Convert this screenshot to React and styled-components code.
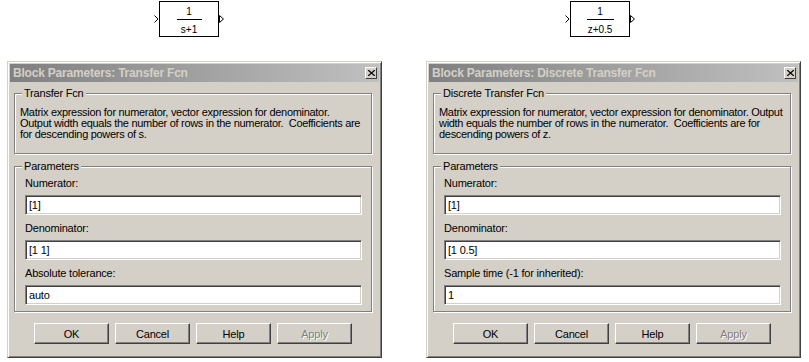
import styled, { createGlobalStyle } from "styled-components";

const GlobalStyle = createGlobalStyle`
  html, body {
    margin: 0;
    background: #fff;
  }
  body {
    font-family: "Liberation Sans", Arial, sans-serif;
  }
`;

const Page = styled.div`
  width: 809px;
  height: 362px;
  padding-left: 7px;
  box-sizing: border-box;
  overflow: hidden;
`;

const Row = styled.div`
  display: flex;
  gap: 44px;
  align-items: flex-start;
`;

const BlockCell = styled.div`
  width: 375px;
  height: 61px;
  padding-top: 1px;
  box-sizing: border-box;
  display: flex;
  align-items: flex-start;
`;

const BlockWrap = styled.div`
  display: flex;
  align-items: center;
  margin-left: ${(p) => p.$offset}px;
`;

const BlockBox = styled.div`
  width: 60px;
  height: 36px;
  box-sizing: border-box;
  border: 1px solid #000;
  padding-top: 5px;
  display: flex;
  flex-direction: column;
  align-items: center;
  font-size: 10px;
  line-height: 10px;
  color: #000;
`;

const FractionLine = styled.div`
  width: ${(p) => p.$width}px;
  height: 1px;
  background: #000;
  margin: 2px 0 5px;
`;

const Window = styled.div`
  width: 375px;
  height: 297px;
  box-sizing: border-box;
  background: #d4d0c8;
  border: 1px solid;
  border-color: #d4d0c8 #404040 #404040 #d4d0c8;
  box-shadow: inset 1px 1px 0 #fff, inset -1px -1px 0 #808080;
  padding: 2px;
  display: flex;
  flex-direction: column;
`;

const TitleBar = styled.div`
  height: 18px;
  background: linear-gradient(to right, #808080, #c0c0c0);
  display: flex;
  align-items: center;
  justify-content: space-between;
  padding: 0 2px 0 3px;
  color: #d4d0c8;
  font-weight: bold;
  font-size: 12px;
  letter-spacing: -0.2px;
`;

const CloseButton = styled.div`
  width: 12px;
  height: 12px;
  box-sizing: border-box;
  background: #d4d0c8;
  border: 1px solid;
  border-color: #fff #404040 #404040 #fff;
  display: flex;
  align-items: center;
  justify-content: center;
`;

const Body = styled.div`
  flex: 1;
  padding: 0 7px 0 4px;
  display: flex;
  flex-direction: column;
  font-size: 11px;
  letter-spacing: -0.2px;
  color: #000;
`;

const GroupBox = styled.fieldset`
  margin: ${(p) => p.$top}px 0 0;
  padding: 0;
  min-width: 0;
  border: 1px solid #808080;
  box-shadow: inset 1px 1px 0 #fff, 1px 1px 0 #fff;
`;

const Legend = styled.legend`
  margin-left: 7px;
  padding: 0 2px;
  line-height: 12px;
  background: #d4d0c8;
`;

const Description = styled.div`
  padding: 8px 0 13px 5px;
  line-height: 11px;
  letter-spacing: -0.3px;
  white-space: pre;
`;

const Fields = styled.div`
  padding: 5px 9px 6px 10px;
  display: flex;
  flex-direction: column;
`;

const Label = styled.div`
  line-height: 12px;
  margin-top: ${(p) => (p.$first ? 0 : 7)}px;
`;

const Input = styled.div`
  height: 20px;
  margin-top: 6px;
  box-sizing: border-box;
  background: #fff;
  border: 1px solid;
  border-color: #808080 #fff #fff #808080;
  box-shadow: inset 1px 1px 0 #404040, inset -1px -1px 0 #d4d0c8;
  padding-left: 3px;
  line-height: 18px;
`;

const Buttons = styled.div`
  display: flex;
  justify-content: center;
  gap: 6px;
  margin-top: 11px;
`;

const Button = styled.div`
  width: 75px;
  height: 21px;
  box-sizing: border-box;
  border: 1px solid;
  border-color: #fff #404040 #404040 #fff;
  box-shadow: inset -1px -1px 0 #808080;
  display: flex;
  align-items: center;
  justify-content: center;
  color: ${(p) => (p.$disabled ? "#808080" : "#000")};
  text-shadow: ${(p) => (p.$disabled ? "1px 1px 0 #fff" : "none")};
`;

const InArrow = () => (
  <svg width="5" height="8" viewBox="0 0 5 8">
    <path d="M0.5 0.5 L4 4 L0.5 7.5" fill="none" stroke="#000" strokeWidth="1" />
  </svg>
);

const OutArrow = () => (
  <svg width="6" height="8" viewBox="0 0 6 8">
    <path d="M0.5 0.5 L4.5 4 L0.5 7.5 Z" fill="none" stroke="#000" strokeWidth="1" />
  </svg>
);

const CloseIcon = () => (
  <svg width="7" height="6" viewBox="0 0 7 6">
    <path d="M0 0 L7 6 M7 0 L0 6" stroke="#000" strokeWidth="1.3" />
  </svg>
);

const Block = ({ offset, num, den, lineWidth }) => (
  <BlockWrap $offset={offset}>
    <InArrow />
    <BlockBox>
      <div>{num}</div>
      <FractionLine $width={lineWidth} />
      <div>{den}</div>
    </BlockBox>
    <OutArrow />
  </BlockWrap>
);

const Dialog = ({ title, group, lines, fields }) => (
  <Window>
    <TitleBar>
      <span>Block Parameters: {title}</span>
      <CloseButton>
        <CloseIcon />
      </CloseButton>
    </TitleBar>
    <Body>
      <GroupBox $top={5}>
        <Legend>{group}</Legend>
        <Description>
          {lines.map((line) => (
            <div key={line}>{line}</div>
          ))}
        </Description>
      </GroupBox>
      <GroupBox $top={6}>
        <Legend>Parameters</Legend>
        <Fields>
          {fields.map((field, i) => (
            <div key={field.label}>
              <Label $first={i === 0}>{field.label}</Label>
              <Input>{field.value}</Input>
            </div>
          ))}
        </Fields>
      </GroupBox>
      <Buttons>
        <Button>OK</Button>
        <Button>Cancel</Button>
        <Button>Help</Button>
        <Button $disabled>Apply</Button>
      </Buttons>
    </Body>
  </Window>
);

const continuous = {
  title: "Transfer Fcn",
  group: "Transfer Fcn",
  lines: [
    "Matrix expression for numerator, vector expression for denominator.",
    "Output width equals the number of rows in the numerator.  Coefficients are",
    "for descending powers of s.",
  ],
  fields: [
    { label: "Numerator:", value: "[1]" },
    { label: "Denominator:", value: "[1 1]" },
    { label: "Absolute tolerance:", value: "auto" },
  ],
};

const discrete = {
  title: "Discrete Transfer Fcn",
  group: "Discrete Transfer Fcn",
  lines: [
    "Matrix expression for numerator, vector expression for denominator. Output",
    "width equals the number of rows in the numerator.  Coefficients are for",
    "descending powers of z.",
  ],
  fields: [
    { label: "Numerator:", value: "[1]" },
    { label: "Denominator:", value: "[1 0.5]" },
    { label: "Sample time (-1 for inherited):", value: "1" },
  ],
};

export default function App() {
  return (
    <Page>
      <GlobalStyle />
      <Row>
        <BlockCell>
          <Block offset={147} num="1" den="s+1" lineWidth={25} />
        </BlockCell>
        <BlockCell>
          <Block offset={139} num="1" den="z+0.5" lineWidth={27} />
        </BlockCell>
      </Row>
      <Row>
        <Dialog {...continuous} />
        <Dialog {...discrete} />
      </Row>
    </Page>
  );
}
